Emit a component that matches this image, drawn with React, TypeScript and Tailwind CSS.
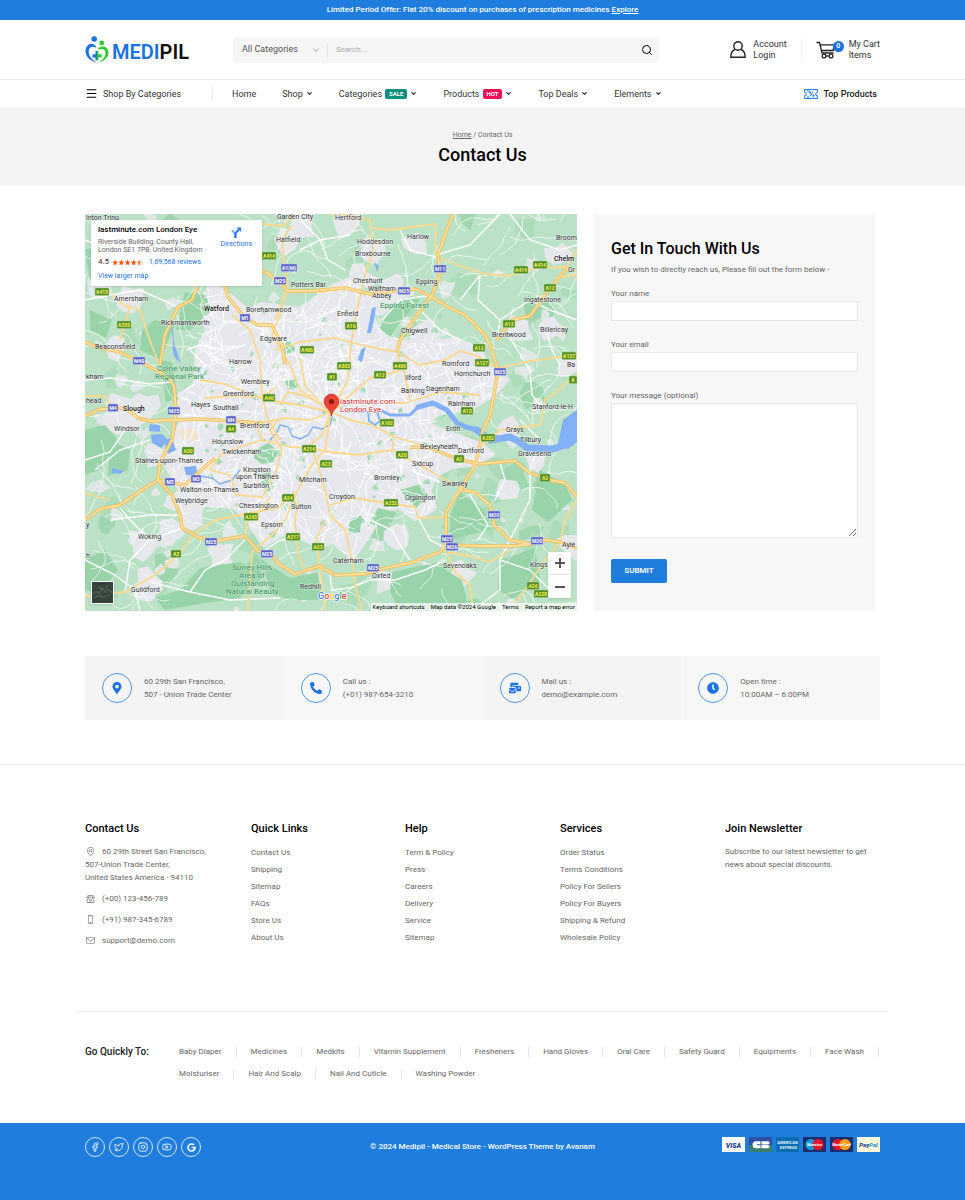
import React from 'react';
import { ChevronDown, Facebook, Instagram, Menu, Search, Twitter, Youtube } from 'lucide-react';
import { FaClock, FaGoogle, FaMailBulk, FaMapMarkerAlt, FaPhoneAlt } from 'react-icons/fa';
import { SlEnvolope, SlLocationPin, SlScreenSmartphone } from 'react-icons/sl';

type Point = [number, number];
type Label = [string, number, number];

const navItems: { label: string; badge?: string; badgeColor?: string; menu: boolean }[] = [
  { label: 'Home', menu: false },
  { label: 'Shop', menu: true },
  { label: 'Categories', badge: 'SALE', badgeColor: 'bg-[#0c8f7c]', menu: true },
  { label: 'Products', badge: 'HOT', badgeColor: 'bg-[#ee1158]', menu: true },
  { label: 'Top Deals', menu: true },
  { label: 'Elements', menu: true },
];

const infoItems = [
  { icon: FaMapMarkerAlt, top: '60 29th San Francisco,', bottom: '507 - Union Trade Center', bg: 'bg-[#f4f4f4]' },
  { icon: FaPhoneAlt, top: 'Call us :', bottom: '(+01) 987-654-3210', bg: 'bg-[#f7f7f7]' },
  { icon: FaMailBulk, top: 'Mail us :', bottom: 'demo@example.com', bg: 'bg-[#f4f4f4]' },
  { icon: FaClock, top: 'Open time :', bottom: '10:00AM – 6:00PM', bg: 'bg-[#f7f7f7]' },
];

const linkColumns = [
  { title: 'Quick Links', links: ['Contact Us', 'Shipping', 'Sitemap', 'FAQs', 'Store Us', 'About Us'] },
  { title: 'Help', links: ['Term & Policy', 'Press', 'Careers', 'Delivery', 'Service', 'Sitemap'] },
  {
    title: 'Services',
    links: ['Order Status', 'Terms Conditions', 'Policy For Sellers', 'Policy For Buyers', 'Shipping & Refund', 'Wholesale Policy'],
  },
];

const quickRows = [
  ['Baby Diaper', 'Medicines', 'Medkits', 'Vitamin Supplement', 'Fresheners', 'Hand Gloves', 'Oral Care', 'Safety Guard', 'Equipments', 'Face Wash'],
  ['Moisturiser', 'Hair And Scalp', 'Nail And Cuticle', 'Washing Powder'],
];

// ---- map data ----

const motorways = [
  'M85 342 L97 347 L120 352 L140 362 L158 371 L170 379 L174 387 L176 410 L172 440 L160 462 L158 480 L172 495 L180 515 L182 528 L200 538 L215 541 L245 536 L258 551 L270 553 L280 565 L295 574 L310 569 L320 566 L335 575 L365 574 L385 568 L410 563 L440 552 L446 545 L446 512 L460 490 L475 465 L480 445 L483 430 L490 415 L493 400 L498 370 L492 350 L485 335 L465 315 L450 308 L430 296 L415 289 L395 291 L370 294 L345 288 L310 291 L288 291 L268 273 L258 270',
  'M197 287 L192 300 L178 307 L165 335 L160 365',
  'M225 286 L228 297 L245 318 L258 325 L272 325 L282 345 L285 365',
  'M453 214 L446 232 L438 255 L440 275 L432 295 L415 318 L400 340 L397 352',
  'M85 416 L100 409 L125 408 L138 418 L150 421 L200 419 L233 421 L262 423',
  'M85 520 L100 509 L120 505 L145 488 L158 480 L185 485 L200 471 L215 458',
  'M460 490 L475 492 L490 505 L494 525 L510 540 L530 544 L545 540 L560 542 L577 548',
  'M446 545 L480 546 L515 546 L530 544',
  'M410 447 L430 448 L455 458 L478 464 L500 462 L515 461 L530 473 L550 480 L565 483 L577 497',
  'M497 340 L512 320 L530 316 L545 295 L565 270 L568 268',
];

const mainRoads = [
  'M331 214 L340 214 L370 220 L373 250 L365 275 L357 310 L351 345 L348 380 L331 412',
  'M373 228 L390 230 L420 226 L435 224 L436 255',
  'M438 257 L455 264 L485 274 L510 276 L535 268 L565 267 L577 272',
  'M285 291 L280 315 L272 335 L290 365 L300 390 L331 412',
  'M200 226 L210 240 L225 275 L225 290',
  'M262 224 L285 226 L292 214 M292 225 L282 240 L284 262 L288 290 L275 320',
  'M287 291 L300 290 L320 292 L345 288',
  'M130 305 L126 320 L120 340',
  'M112 295 L125 306 L140 310 L148 335 L158 362',
  'M200 380 L225 384 L245 392 L265 400 L300 405 L331 412',
  'M204 398 L232 396 L262 397 L275 388',
  'M232 315 L250 330 L260 360 L262 395 L268 420 L280 440',
  'M262 423 L285 418 L310 420 L331 412',
  'M255 421 L262 440 L240 447 L220 455 L210 470 L230 475 L236 495 L262 497 L275 475 L282 450',
  'M275 350 L300 342 L335 338 L365 346 L397 352 L405 375 L410 400',
  'M397 352 L420 365 L445 360 L460 351 L475 355 L498 368 L530 361 L560 357 L577 354',
  'M331 412 L350 395 L370 378 L395 372 L405 368',
  'M331 412 L350 420 L372 425 L395 437 L425 446',
  'M394 438 L392 450 L430 471 L455 485',
  'M331 412 L322 435 L310 445 L318 465 L325 490 L330 515 L345 530 L352 560 L355 585 L362 611',
  'M331 412 L325 450 L312 465 L298 490 L285 520 L272 535 L252 552 L248 611',
  'M310 448 L290 447 L262 440 M282 450 L270 430 L280 418',
  'M182 550 L195 533 L215 520 L245 514 L278 508 L295 492',
  'M182 550 L165 567 L150 578 L125 592 L85 596',
  'M245 536 L248 520 L262 510 L270 497',
  'M298 500 L295 520 L298 555 L306 572',
  'M330 505 L355 498 L385 503 L415 507 L418 518 L446 517',
  'M446 550 L455 572 L470 585 L473 611 M446 552 L470 556 L490 562 L510 550',
  'M483 445 L500 430 L540 425 L545 400 L577 375',
  'M560 542 L565 520 L577 500 M560 542 L545 560 L525 590 L510 611',
  'M565 270 L577 250 M577 275 L555 278',
  'M331 412 L345 402 L375 403 L405 403 L440 392 L480 395',
  'M320 566 L323 590 L325 611 M320 566 L316 540 L325 520',
  'M85 493 L110 500 M85 396 L105 396 L112 408',
  'M308 448 L330 452 L358 455 L392 450',
  'M300 358 L305 385 L318 400 M280 405 L288 392 L305 396 L322 404',
];

const lanes = [
  'M85 240 L110 250 L140 240 L180 250 L200 226 M85 300 L110 295 L140 290 L178 307',
  'M85 380 L110 378 L150 384 L172 382 M95 470 L120 450 L150 440 M85 460 L110 452 L125 430',
  'M110 520 L150 515 L180 515 M125 592 L130 560 L150 540 L182 528 M150 540 L130 520 L118 505',
  'M85 560 L115 575 L135 590 L140 611 M150 582 L190 592 L230 600 L280 598',
  'M400 230 L410 250 L436 257 M436 255 L470 245 L500 214 M480 275 L478 300 L500 320 L497 340',
  'M480 275 L460 300 M500 320 L530 300 L550 310 L577 320 M510 338 L530 370 L532 395 L545 410',
  'M410 300 L440 330 L460 340 M382 320 L400 300 L432 295 M546 330 L552 350 L560 365',
  'M410 470 L440 482 M447 512 L455 495 L480 460 M470 495 L488 525 L478 540',
  'M530 470 L530 500 L515 530 L500 560 L500 590 L480 605 M500 560 L530 570 L550 590',
  'M370 520 L392 530 L400 545 L410 560 M412 505 L430 540 L446 548',
  'M262 552 L280 540 L298 540 M245 540 L225 560 L205 570 L190 592',
  'M330 575 L332 590 L350 588 L370 580 L395 580 M395 580 L425 570 L446 560',
  'M295 214 L320 240 L328 260 L345 270 M300 250 L320 240 L350 235',
  'M186 350 L200 345 L225 350 L245 345 M186 390 L200 380 L205 365 L190 350',
  'M520 420 L540 440 L530 470 M500 462 L505 480 L495 500',
  'M510 214 L530 240 L560 250 L577 245',
];

const urbanArea =
  'M212 286 L232 298 L248 312 L262 305 L300 310 L335 286 L350 280 L364 300 L374 322 L388 340 L400 342 L430 344 L455 340 L480 350 L486 366 L506 380 L492 395 L470 408 L440 412 L425 424 L450 434 L478 444 L492 454 L470 464 L452 466 L436 474 L428 490 L434 508 L415 518 L398 505 L380 515 L368 535 L352 558 L335 540 L318 546 L300 536 L284 532 L264 544 L248 520 L235 506 L202 502 L180 488 L166 464 L174 444 L182 420 L180 395 L196 386 L198 350 L208 330 L198 306 Z';

const parkAreas = [
  'M255 450 L268 443 L278 450 L274 462 L262 464 L254 458 Z',
  'M260 474 L270 472 L274 488 L264 494 Z',
  'M380 328 L392 305 L412 296 L420 300 L400 322 L390 338 Z',
  'M155 320 L175 325 L160 360 L140 350 L142 330 Z',
  'M160 360 L172 362 L178 400 L166 402 Z',
  'M85 430 L105 425 L118 440 L100 470 L85 475 Z',
  'M110 440 L130 450 L128 470 L108 476 Z',
  'M200 568 L240 562 L262 572 L240 598 L200 604 L165 610 L155 598 L180 590 Z',
  'M262 560 L290 578 L318 572 L322 600 L290 600 L270 592 Z',
  'M392 572 L410 568 L440 562 L446 570 L462 580 L468 606 L430 611 L400 611 L390 592 Z',
  'M460 492 L485 510 L490 530 L450 540 L450 515 Z',
  'M540 470 L565 484 L572 500 L548 522 L532 510 Z',
  'M500 560 L535 548 L540 580 L515 600 L498 590 Z',
  'M378 508 L396 512 L392 522 L368 526 Z',
  'M90 310 L112 320 L106 338 L90 330 Z',
  'M280 345 L290 340 L296 350 L286 356 Z',
  'M285 380 L296 378 L298 388 L288 390 Z',
  'M85 250 L100 245 L108 262 L90 280 Z',
  'M185 292 L205 295 L212 310 L190 330 L176 330 Z',
  'M400 490 L420 484 L428 495 L416 508 Z',
  'M350 520 L362 514 L360 532 L348 534 Z',
  'M85 560 L105 550 L118 570 L100 592 L85 590 Z',
];

const towns: Label[] = [
  ['Garden City', 277, 219], ['Hertford', 335, 220], ['Hatfield', 276, 242], ['Harlow', 407, 239],
  ['Hoddesdon', 357, 244], ['Broxbourne', 355, 256], ['Broom', 556, 240], ['Gr', 568, 272],
  ['Cheshunt', 353, 283], ['Epping', 416, 284], ['Waltham', 368, 291], ['Abbey', 372, 298],
  ['Potters Bar', 291, 287], ['Ingatestone', 524, 302], ['Amersham', 114, 301], ['Borehamwood', 246, 312],
  ['Enfield', 337, 316], ['Rickmansworth', 161, 325], ['Chigwell', 401, 333], ['Billericay', 540, 332],
  ['Brentwood', 492, 337], ['Edgware', 260, 341], ['Beaconsfield', 95, 349], ['Harrow', 229, 364],
  ['Romford', 442, 366], ['Ba', 567, 367], ['Hornchurch', 454, 376], ['Wembley', 241, 384],
  ['Ilford', 405, 380], ['Greenford', 223, 396], ['Barking', 401, 393], ['Dagenham', 426, 391],
  ['kham', 86, 379], ['head', 86, 403], ['Hayes', 191, 407], ['Southall', 213, 410],
  ['Rainham', 448, 406], ['Stanford-le-H', 532, 409], ['Windsor', 114, 431], ['Brentford', 240, 428],
  ['Erith', 446, 431], ['Grays', 506, 432], ['Hounslow', 212, 444], ['Tilbury', 520, 442],
  ['Twickenham', 222, 454], ['Bexleyheath', 420, 449], ['Dartford', 458, 453], ['Gravesend', 518, 456],
  ['Staines-upon-Thames', 135, 463], ['Sidcup', 412, 466], ['Kingston', 243, 472], ['upon Thames', 236, 479],
  ['Bromley', 374, 480], ['Surbiton', 243, 488], ['Mitcham', 299, 482], ['Swanley', 442, 486],
  ['Walton-on-Thames', 180, 492], ['Weybridge', 175, 503], ['Croydon', 329, 499], ['Orpington', 405, 500],
  ['Chessington', 239, 508], ['Sutton', 291, 509], ['y', 86, 527], ['Epsom', 261, 527],
  ['Woking', 138, 539], ['Ayle', 562, 547], ['Caterham', 333, 563], ['Sevenoaks', 443, 568],
  ['Kings', 530, 567], ['Oxted', 372, 578], ['Redhill', 300, 589], ['Guildford', 131, 592],
  ['inton Tring', 86, 220], ['h', 86, 558],
];

const boldTowns: Label[] = [['Watford', 204, 311], ['Slough', 123, 411], ['Chelm', 554, 261]];

const parkLabels: Label[] = [
  ['Colne Valley', 157, 371], ['Regional Park', 155, 379], ['Epping Forest', 380, 308],
  ['Surrey Hills', 232, 570], ['Area of', 239, 578], ['Outstanding', 231, 586], ['Natural Beauty', 226, 594],
];

const motorwaySigns: Label[] = [
  ['A1(M)', 289, 268], ['M25', 280, 281], ['M11', 440, 269], ['M25', 404, 291], ['M1', 245, 318],
  ['M40', 139, 361], ['M25', 500, 372], ['M4', 113, 408], ['M25', 174, 411], ['M4', 231, 420],
  ['M3', 170, 482], ['M3', 196, 479], ['M25', 211, 542], ['M25', 267, 554], ['M20', 494, 515],
  ['M25', 447, 539], ['M26', 452, 547], ['M20', 537, 541], ['M25', 373, 568],
];

const roadSigns: Label[] = [
  ['A414', 269, 256], ['A414', 521, 270], ['A414', 540, 265], ['A413', 102, 292], ['A12', 550, 288],
  ['A355', 124, 325], ['A10', 351, 326], ['A12', 509, 324], ['A406', 307, 350], ['A12', 479, 348],
  ['A127', 482, 363], ['A127', 569, 356], ['A503', 344, 366], ['A406', 400, 366], ['A12', 380, 375],
  ['A1', 332, 377], ['A13', 467, 411], ['A40', 269, 398], ['A4', 231, 429], ['A102', 387, 423],
  ['A282', 488, 438], ['A30', 188, 451], ['A214', 309, 449], ['A20', 402, 455], ['A2', 459, 459],
  ['A23', 326, 464], ['A24', 288, 498], ['A2', 545, 478], ['A232', 391, 503], ['A243', 251, 517],
  ['A217', 293, 537], ['A3', 176, 554], ['A23', 318, 547], ['A26', 533, 586], ['A228', 541, 594],
  ['A', 573, 380],
];

// small deterministic generator so that the side streets never move between renders
function makeRandom(seed: number) {
  let s = seed;
  return () => {
    s = (s * 16807) % 2147483647;
    return s / 2147483647;
  };
}

function wander(rand: () => number, start: Point, steps: number, length: number) {
  let [x, y] = start;
  let angle = rand() * Math.PI * 2;
  let d = `M${x.toFixed(1)} ${y.toFixed(1)}`;
  for (let i = 0; i < steps; i++) {
    angle += (rand() - 0.5) * 1.1;
    x += Math.cos(angle) * length;
    y += Math.sin(angle) * length;
    d += ` L${x.toFixed(1)} ${y.toFixed(1)}`;
  }
  return d;
}

function patch(rand: () => number, [cx, cy]: Point, radius: number) {
  const points: string[] = [];
  for (let i = 0; i < 9; i++) {
    const a = (i / 9) * Math.PI * 2;
    const r = radius * (0.5 + rand() * 0.8);
    points.push(`${(cx + Math.cos(a) * r).toFixed(1)},${(cy + Math.sin(a) * r).toFixed(1)}`);
  }
  return points.join(' ');
}

const rand = makeRandom(4217);
const anywhere = (): Point => [85 + rand() * 492, 214 + rand() * 397];
const countryStreets = Array.from({ length: 240 }, () => wander(rand, anywhere(), 8, 6));
const cityStreets = Array.from({ length: 560 }, () => wander(rand, [175 + rand() * 325, 285 + rand() * 265], 6, 5));
const fields = Array.from({ length: 60 }, () => patch(rand, anywhere(), 7 + rand() * 9));
const villages = Array.from({ length: 90 }, () => patch(rand, anywhere(), 3 + rand() * 6));
const cityParks = Array.from({ length: 90 }, () => patch(rand, [190 + rand() * 280, 305 + rand() * 230], 1 + rand() * 3));
const townPatches: Point[] = [
  [415, 243], [374, 250], [300, 225], [290, 245], [360, 278], [560, 254], [520, 328], [552, 328], [130, 300],
  [115, 346], [120, 408], [115, 425], [140, 545], [145, 582], [150, 590], [170, 535], [220, 555], [510, 432],
  [535, 458], [507, 490], [460, 573], [385, 580], [310, 588], [348, 225], [567, 365], [180, 500], [190, 515],
  [135, 255], [205, 270], [100, 285], [345, 510], [395, 535], [570, 545], [450, 456], [395, 288], [145, 405],
  [135, 420], [155, 455], [380, 300], [425, 335],
];
const townShapes = townPatches.map((p) => patch(rand, p, 14));

const MapDrawing: React.FC = () => (
  <svg
    viewBox="85 214 492 397"
    preserveAspectRatio="xMidYMid slice"
    className="block h-full w-full"
    role="img"
    aria-label="Map of London"
    fontFamily="Roboto, sans-serif"
  >
    <defs>
      <clipPath id="city">
        <path d={urbanArea} />
      </clipPath>
    </defs>
    <rect x="85" y="214" width="492" height="397" fill="#bbe2c6" />
    {fields.map((p, i) => (
      <polygon key={i} points={p} fill={i % 3 ? '#addcbb' : '#9fd6b0'} />
    ))}
    {villages.map((p, i) => (
      <polygon key={i} points={p} fill="#dfe8e4" />
    ))}
    {townShapes.map((p, i) => (
      <polygon key={i} points={p} fill="#e6e8ec" />
    ))}
    <path d={urbanArea} fill="#e7e8ed" stroke="#e7e8ed" strokeWidth="6" strokeLinejoin="round" />
    {cityParks.map((p, i) => (
      <polygon key={i} points={p} fill="#a9dab8" />
    ))}
    {parkAreas.map((d) => (
      <path key={d} d={d} fill="#98d3aa" />
    ))}
    <path d="M177 431 L184 428 L196 430 L200 436 L196 441 L182 440 Z" fill="#f3e4d2" />

    <g fill="none" stroke="#fff">
      <g strokeWidth="0.8" opacity="0.85">
        {countryStreets.map((d, i) => (
          <path key={i} d={d} />
        ))}
      </g>
      <g strokeWidth="0.9" clipPath="url(#city)">
        {cityStreets.map((d, i) => (
          <path key={i} d={d} />
        ))}
      </g>
      <g strokeWidth="1.4">
        {lanes.map((d) => (
          <path key={d} d={d} />
        ))}
      </g>
    </g>

    <g fill="#83b1f7">
      <path d="M150 424 L160 425 L160 432 L149 431 Z M151 435 L162 434 L168 440 L161 448 L152 443 Z M164 440 L172 438 L176 450 L168 454 Z M184 467 L196 466 L198 476 L186 475 Z M112 468 L124 471 L120 474 L112 473 Z" />
      <path d="M372 308 L376 307 L374 320 L371 333 L367 333 Z M361 350 L366 346 L362 362 L358 360 Z M374 262 L379 266 L377 272 Z M172 345 L177 352 L178 362 L174 356 Z" />
      <path d="M558 444 L563 420 L577 410 L577 442 L568 449 Z" />
    </g>
    <g fill="none" stroke="#83b1f7" strokeLinejoin="round" strokeLinecap="round">
      <path d="M200 476 L212 478 L220 484 L232 480 L240 470" strokeWidth="1.5" />
      <path d="M270 440 L277 432 L280 425 L288 427 L292 436 L300 439 L308 435 L313 427 L322 429 L330 425 L332 417" strokeWidth="1.4" />
      <path d="M345 412 L358 412 L368 412 L369 421 L375 425 L380 421 L377 411 L383 411" strokeWidth="2" />
      <path d="M382 411 L390 415 L410 415 L418 407 L433 403" strokeWidth="3" />
      <path d="M418 407 L433 403 L447 410 L457 423 L466 427 L477 430" strokeWidth="5" />
      <path d="M477 430 L490 440 L510 437 L520 442 L527 448 L553 449 L565 445" strokeWidth="7" />
      <path d="M172 328 L174 345 L180 362" strokeWidth="1.2" />
    </g>

    <g fill="none" stroke="#fbd98f" strokeLinejoin="round" strokeWidth="1.8">
      {mainRoads.map((d) => (
        <path key={d} d={d} />
      ))}
    </g>
    <g fill="none" strokeLinejoin="round">
      {motorways.map((d) => (
        <path key={d} d={d} stroke="#f3bd55" strokeWidth="3.4" />
      ))}
      {motorways.map((d) => (
        <path key={d} d={d} stroke="#fddf9d" strokeWidth="1.8" />
      ))}
    </g>

    <g fontSize="7" fill="#2b2d31" stroke="#fff" strokeOpacity="0.7" strokeWidth="1" paintOrder="stroke" strokeLinejoin="round">
      {towns.map(([name, x, y]) => (
        <text key={name + x} x={x} y={y}>
          {name}
        </text>
      ))}
      <g fontWeight="500" fill="#111">
        {boldTowns.map(([name, x, y]) => (
          <text key={name} x={x} y={y}>
            {name}
          </text>
        ))}
      </g>
    </g>
    <g fontSize="8" fill="#39905a" stroke="#d5eedc" strokeOpacity="0.7" strokeWidth="1" paintOrder="stroke">
      {parkLabels.map(([name, x, y]) => (
        <text key={name} x={x} y={y}>
          {name}
        </text>
      ))}
    </g>
    <g fontSize="5" fontWeight="700" fill="#fff" textAnchor="middle">
      {motorwaySigns.map(([name, x, y]) => (
        <g key={name + x + y}>
          <rect x={x - name.length - 3} y={y - 4} width={name.length * 2 + 6} height="7.5" rx="1" fill="#5b63c9" stroke="#c3c9f2" strokeWidth="0.5" />
          <text x={x} y={y + 2}>
            {name}
          </text>
        </g>
      ))}
      {roadSigns.map(([name, x, y]) => (
        <g key={name + x + y}>
          <rect x={x - name.length - 3} y={y - 4} width={name.length * 2 + 6} height="7.5" rx="1" fill="#53902a" stroke="#a8cf8a" strokeWidth="0.5" />
          <text x={x} y={y + 2} fill="#fbf04e">
            {name}
          </text>
        </g>
      ))}
    </g>

    <path d="M331.500 416 C330.500 409 324 407 324 401.500 A7.500 7.500 0 0 1 339 401.500 C339 407 332.500 409 331.500 416 Z" fill="#ea4335" stroke="#c5221f" strokeWidth="0.6" />
    <circle cx="331.500" cy="401.500" r="2.600" fill="#8c1a14" />
    <g fontSize="8" fill="#d5252a" stroke="#fff" strokeWidth="1.4" paintOrder="stroke">
      <text x="340" y="404">lastminute.com</text>
      <text x="340" y="412">London Eye</text>
    </g>
    <text x="318" y="599" fontSize="9" fontWeight="500" stroke="#fff" strokeWidth="1.4" paintOrder="stroke">
      <tspan fill="#4285f4">G</tspan>
      <tspan fill="#ea4335">o</tspan>
      <tspan fill="#fbbc05">o</tspan>
      <tspan fill="#4285f4">g</tspan>
      <tspan fill="#34a853">l</tspan>
      <tspan fill="#ea4335">e</tspan>
    </text>
  </svg>
);

const Stars: React.FC = () => (
  <svg viewBox="0 0 50 10" className="h-[7px] w-[31px]" role="img" aria-label="4.5 stars">
    {[0, 1, 2, 3].map((i) => (
      <path key={i} transform={`translate(${i * 10} 0)`} d="M5 .3 6.400 3.500 9.800 3.800 7.200 6.100 8 9.500 5 7.700 2 9.500 2.800 6.100.2 3.800 3.600 3.500Z" fill="#ef5b17" />
    ))}
    <path transform="translate(40 0)" d="M5 .3V7.700L2 9.500 2.800 6.100.2 3.800 3.600 3.500Z" fill="#ef5b17" />
    <path transform="translate(40 0)" d="M5 .3 6.400 3.500 9.800 3.800 7.200 6.100 8 9.500 5 7.700Z" fill="#f7c9ae" />
  </svg>
);

const MapPanel: React.FC = () => (
  <section className="relative h-[397px] min-w-0 flex-1 overflow-hidden" aria-label="Our location">
    <MapDrawing />
    <div className="absolute top-[6px] left-[6px] flex h-[66px] w-[171px] justify-between bg-white pt-1 pr-[10px] pl-[7px] shadow-sm">
      <div className="text-[7px] leading-2 whitespace-nowrap text-[#5f6368]">
        <h2 className="mb-[2px] text-[8px] leading-3 font-medium text-black">lastminute.com London Eye</h2>
        <p>Riverside Building, County Hall,</p>
        <p>London SE1 7PB, United Kingdom</p>
        <p className="mt-1 flex items-center gap-[3px]">
          <span className="text-[8px] text-[#333]">4.5</span>
          <Stars />
          <a href="#reviews" className="ml-[3px] text-[#1a73e8]">1,69,568 reviews</a>
        </p>
        <a href="#larger-map" className="mt-[6px] block text-[#1a73e8]">View larger map</a>
      </div>
      <a href="#directions" className="flex flex-col items-center text-[7px] leading-2 text-[#1a73e8]">
        <svg viewBox="0 0 12 14" className="mt-[2px] mb-[1px] h-[13px] w-3" aria-hidden="true">
          <path d="M5 13V8.500L1.500 4.500" fill="none" stroke="#7aaaf2" strokeWidth="2" />
          <path d="M5.500 13V7.500L9 4" fill="none" stroke="#2f7de9" strokeWidth="2.400" />
          <path d="M6.500 1.500h5V6.500z" fill="#2f7de9" />
        </svg>
        Directions
      </a>
    </div>
    <button
      type="button"
      aria-label="Show satellite imagery"
      className="absolute bottom-[7px] left-[6px] size-[23px] border border-white bg-[#36433a] shadow"
    >
      <svg viewBox="0 0 20 20" className="size-full" aria-hidden="true">
        <path d="M0 12l4-3 3 2 3-5 3 4 3-3 4 4M2 15l5-2 4 2 6-3M6 4l3 3M15 3l-2 4" fill="none" stroke="#5a6657" strokeWidth="1" />
      </svg>
    </button>
    <div className="absolute right-[6px] bottom-[13px] flex w-[23px] flex-col bg-white text-[#555] shadow">
      <button type="button" aria-label="Zoom in" className="flex h-[23px] items-center justify-center border-b border-[#e6e6e6]">
        <svg viewBox="0 0 10 10" className="size-[10px]"><path d="M5 0v10M0 5h10" stroke="currentColor" strokeWidth="2" /></svg>
      </button>
      <button type="button" aria-label="Zoom out" className="flex h-[23px] items-center justify-center">
        <svg viewBox="0 0 10 10" className="size-[10px]"><path d="M0 5h10" stroke="currentColor" strokeWidth="2" /></svg>
      </button>
    </div>
    <div className="absolute right-0 bottom-0 flex h-2 items-center gap-[6px] bg-white/70 px-[2px] text-[6px] leading-2 text-black">
      <button type="button">Keyboard shortcuts</button>
      <span>Map data ©2024 Google</span>
      <a href="#terms">Terms</a>
      <a href="#report">Report a map error</a>
    </div>
  </section>
);

const Logo: React.FC = () => (
  <a href="#home" className="flex w-[148px] items-center gap-[3px]" aria-label="Medipil">
    <svg viewBox="0 0 24 27" className="h-[27px] w-6" aria-hidden="true">
      <circle cx="9.200" cy="3" r="2.800" fill="#1a73e0" />
      <circle cx="16.700" cy="7" r="2.400" fill="#2ccb2c" />
      <path d="M11.500 12.500C11 8.500 6.500 6.300 3.200 9 -.8 12.300-.3 19 4 22.800 6.800 25.200 9.500 26 11.800 26.500 8.500 24.500 4.500 21.500 3.800 17 3.200 13.300 5 10.800 7.500 10.800 9.500 10.800 10.800 11.600 11.500 12.500Z" fill="#1a73e0" />
      <path d="M12.500 13.500C14 10.500 18.800 9.300 21.500 12 25 15.500 23.500 20.500 20 23.500 17.800 25.400 15.500 26 14 26.500 16.500 24.500 19.500 22.500 20.300 19 21 15.800 19.700 13.300 17.500 13.100 15.500 12.900 13.500 13.600 12.500 13.500Z" fill="#2ccb2c" />
      <path d="M10.500 15H12v9.200h-1.500v-2.700H7.500v-3.300h3Z" fill="#1a73e0" />
      <path d="M12 15h1.500v3.200h3.200v3.300h-3.200v2.700H12Z" fill="#2ccb2c" />
    </svg>
    <span className="pt-1 text-[20px] leading-6 font-semibold text-[#111]">
      <span className="text-[#1a73e0]">MEDI</span>PIL
    </span>
  </a>
);

const Header: React.FC = () => (
  <header>
    <p className="h-5 bg-[#1f7edd] text-center text-[8px] leading-[19px] font-medium text-white">
      Limited Period Offer: Flat 20% discount on purchases of prescription medicines{' '}
      <a href="#explore" className="underline">Explore</a>
    </p>
    <div className="border-b border-[#ececec]">
      <div className="mx-auto flex h-[59px] max-w-[795px] items-center">
        <Logo />
        <form role="search" className="flex h-[26px] max-w-[426px] flex-1 items-center rounded bg-[#f6f6f6]" onSubmit={(e) => e.preventDefault()}>
          <div className="relative flex h-[14px] w-[95px] items-center border-r border-[#e2e2e2]">
            <select aria-label="Category" className="w-full appearance-none bg-transparent pl-[9px] text-[9px] text-[#555] outline-none">
              <option>All Categories</option>
            </select>
            <ChevronDown className="pointer-events-none absolute right-[6px] size-[10px] text-[#888]" strokeWidth={2} />
          </div>
          <input type="search" aria-label="Search" placeholder="Search..." className="min-w-0 flex-1 bg-transparent px-2 text-[8px] outline-none placeholder:text-[#aaa]" />
          <button type="submit" aria-label="Submit search" className="px-[6px] text-black">
            <Search className="size-3" strokeWidth={2} />
          </button>
        </form>
        <div className="ml-auto flex items-center text-[9px] leading-[11px] text-[#333]">
          <a href="#account" className="flex items-center gap-[7px] border-r border-[#eee] py-[1px] pr-[14px]">
            <svg viewBox="0 0 16 17" className="h-[17px] w-4" fill="none" stroke="#222" strokeWidth="1.4" aria-hidden="true">
              <circle cx="8" cy="5" r="4.200" />
              <path d="M4.800 8.500C2.300 9.600.8 12 .8 16.200h14.400C15.200 12 13.700 9.600 11.200 8.500" strokeLinejoin="round" />
            </svg>
            <span>Account<br />Login</span>
          </a>
          <a href="#cart" className="flex items-center gap-[5px] pl-[14px]">
            <span className="relative block w-7">
              <svg viewBox="0 0 20 18" className="h-[18px] w-5" fill="none" stroke="#222" strokeWidth="1.300" aria-hidden="true">
                <path d="M.5 1.500h3L6 12h11.500M4.200 3.800H18L17.200 9.500H5.500" />
                <circle cx="8" cy="15" r="1.900" />
                <circle cx="15" cy="15" r="1.900" />
                <path d="M10 15h3" />
              </svg>
              <span className="absolute top-0 right-0 flex size-[11px] items-center justify-center rounded-full bg-[#1a73e0] text-[7px] leading-none font-semibold text-white">0</span>
            </span>
            <span>My Cart<br />Items</span>
          </a>
        </div>
      </div>
    </div>
    <nav className="mx-auto flex h-[27px] max-w-[795px] items-center text-[9px] leading-3 text-[#333]">
      <button type="button" className="flex w-[128px] items-center gap-[5px] border-r border-[#e8e8e8]">
        <Menu className="size-[13px] text-black" strokeWidth={2} />
        Shop By Categories
      </button>
      <ul className="ml-[19px] flex items-center gap-[26px]">
        {navItems.map((item) => (
          <li key={item.label}>
            <a href="#nav" className="flex items-center gap-[3px]">
              {item.label}
              {item.badge && (
                <span className={`rounded-[2px] px-1 text-[6px] leading-[10px] font-bold text-white ${item.badgeColor}`}>{item.badge}</span>
              )}
              {item.menu && <ChevronDown className="size-[7px]" strokeWidth={4} />}
            </a>
          </li>
        ))}
      </ul>
      <a href="#top" className="ml-auto flex items-center gap-[5px] pr-[3px] font-medium text-[#222]">
        <svg viewBox="0 0 14 10" className="h-[10px] w-[14px]" fill="none" stroke="#3b8ae6" strokeWidth="1.100" aria-hidden="true">
          <path d="M.6.6h12.800v2.700a1.700 1.700 0 0 0 0 3.400v2.700H.6V6.700a1.700 1.700 0 0 0 0-3.400Z" />
          <path d="M4 1v2M4 7v2M9 2.800 6 7.200" />
          <circle cx="6" cy="3.500" r=".7" />
          <circle cx="9.400" cy="6.500" r=".7" />
        </svg>
        Top Products
      </a>
    </nav>
  </header>
);

const ContactForm: React.FC = () => (
  <form className="flex w-[281px] flex-col bg-[#f7f7f7] px-[17px] pt-[25px] pb-[28px] text-[8px] text-[#666]" onSubmit={(e) => e.preventDefault()}>
    <h2 className="text-[16px] leading-5 font-medium text-black">Get In Touch With Us</h2>
    <p className="mt-[5px] leading-3">If you wish to directly reach us, Please fill out the form below -</p>
    <label htmlFor="name" className="mt-3 leading-3">Your name</label>
    <input id="name" type="text" className="mt-[1px] h-5 border border-[#e8e8e8] bg-white px-1" />
    <label htmlFor="email" className="mt-[18px] leading-3">Your email</label>
    <input id="email" type="email" className="mt-[1px] h-5 border border-[#e8e8e8] bg-white px-1" />
    <label htmlFor="message" className="mt-[18px] leading-3">Your message (optional)</label>
    <textarea id="message" className="mt-[1px] h-[135px] resize border border-[#e8e8e8] bg-white px-1" />
    <button type="submit" className="mt-[21px] h-6 w-14 rounded-[2px] bg-[#1f7edd] text-[8px] font-semibold text-white">SUBMIT</button>
  </form>
);

const DeskPhone: React.FC = () => (
  <svg viewBox="0 0 10 9" className="h-2 w-[9px]" fill="none" stroke="currentColor" strokeWidth="0.800" aria-hidden="true">
    <path d="M.5 3C.5 1.200 2.500.5 5 .5s4.500.7 4.500 2.500L7.500 3.400V2.300h-5v1.100Z" />
    <path d="M3 3.500 1.200 5.500v3h7.600v-3L7 3.500" />
    <circle cx="5" cy="6" r="1.200" />
  </svg>
);

const CardLogos: React.FC = () => (
  <ul className="flex gap-1">
    <li>
      <svg viewBox="0 0 23 15" className="h-[15px] w-[23px]" role="img" aria-label="Visa">
        <rect width="23" height="15" fill="#fff" />
        <text x="11.500" y="10.500" textAnchor="middle" fontSize="7" fontWeight="900" fontStyle="italic" fontFamily="Roboto" fill="#1b3f95">VISA</text>
      </svg>
    </li>
    <li>
      <svg viewBox="0 0 23 15" className="h-[15px] w-[23px]" role="img" aria-label="Carte Bleue">
        <rect width="23" height="8" fill="#2d4fa5" />
        <rect y="8" width="23" height="7" fill="#35806e" />
        <path d="M11.500 4.200H7a3.500 3.500 0 0 0 0 7h4.500V8.200H8V7.200h3.500Z" fill="#fff" />
        <path d="M12.500 4.200h6.500a1.600 1.600 0 0 1 0 3.200H12.500Z M12.500 8h6.500a1.600 1.600 0 0 1 0 3.200H12.500Z" fill="#fff" />
      </svg>
    </li>
    <li>
      <svg viewBox="0 0 23 15" className="h-[15px] w-[23px]" role="img" aria-label="American Express">
        <rect width="23" height="15" fill="#0b6db0" />
        <text x="11.500" y="7" textAnchor="middle" fontSize="4" fontWeight="900" fontFamily="Roboto" fill="#cfe6f5">AMERICAN</text>
        <text x="12.500" y="12" textAnchor="middle" fontSize="4" fontWeight="900" fontFamily="Roboto" fill="#cfe6f5">EXPRESS</text>
      </svg>
    </li>
    <li>
      <svg viewBox="0 0 23 15" className="h-[15px] w-[23px]" role="img" aria-label="Maestro">
        <rect width="23" height="15" fill="#1c2f6b" />
        <circle cx="8" cy="7.500" r="5.500" fill="#0a9de0" />
        <circle cx="15" cy="7.500" r="5.500" fill="#e5142b" />
        <text x="11.500" y="9" textAnchor="middle" fontSize="4" fontWeight="700" fontFamily="Roboto" fill="#fff">Maestro</text>
      </svg>
    </li>
    <li>
      <svg viewBox="0 0 23 15" className="h-[15px] w-[23px]" role="img" aria-label="MasterCard">
        <rect width="23" height="15" fill="#1c2f6b" />
        <circle cx="8" cy="7.500" r="5.500" fill="#e5142b" />
        <circle cx="15" cy="7.500" r="5.500" fill="#f7a11a" />
        <text x="11.500" y="9" textAnchor="middle" fontSize="3.500" fontWeight="700" fontFamily="Roboto" fill="#fff">MasterCard</text>
      </svg>
    </li>
    <li>
      <svg viewBox="0 0 23 15" className="h-[15px] w-[23px]" role="img" aria-label="PayPal">
        <rect width="23" height="15" fill="#fdf6d8" />
        <text x="11.500" y="10" textAnchor="middle" fontSize="6" fontWeight="900" fontStyle="italic" fontFamily="Roboto" fill="#1b3f8a">
          Pay<tspan fill="#2a9bd8">Pal</tspan>
        </text>
      </svg>
    </li>
  </ul>
);

const socials = [
  { name: 'Facebook', icon: Facebook },
  { name: 'Twitter', icon: Twitter },
  { name: 'Instagram', icon: Instagram },
  { name: 'YouTube', icon: Youtube },
];

const Footer: React.FC = () => (
  <footer className="mt-11 border-t border-[#e8e8e8]">
    <div className="mx-auto grid max-w-[795px] grid-cols-[166px_154px_155px_165px_1fr] pt-[57px] pb-16 text-[8px] text-[#666]">
      <div>
        <h3 className="text-[11px] leading-[14px] font-medium text-black">Contact Us</h3>
        <address className="mt-[9px] leading-[13px] not-italic">
          <SlLocationPin className="mr-[7px] ml-[1px] inline size-[9px]" />
          60 29th Street San Francisco,
          <br />
          507-Union Trade Center,
          <br />
          United States America - 94110
        </address>
        <ul className="mt-2 flex flex-col gap-2 leading-[13px]">
          <li className="flex items-center gap-[7px] pl-[1px]"><DeskPhone />(+00) 123-456-789</li>
          <li className="flex items-center gap-[7px] pl-[1px]"><SlScreenSmartphone className="size-[9px]" />(+91) 987-345-6789</li>
          <li className="flex items-center gap-[7px] pl-[1px]"><SlEnvolope className="size-[9px]" />support@demo.com</li>
        </ul>
      </div>
      {linkColumns.map((col) => (
        <div key={col.title}>
          <h3 className="text-[11px] leading-[14px] font-medium text-black">{col.title}</h3>
          <ul className="mt-2 leading-[17px]">
            {col.links.map((link) => (
              <li key={link}><a href="#link">{link}</a></li>
            ))}
          </ul>
        </div>
      ))}
      <div>
        <h3 className="text-[11px] leading-[14px] font-medium text-black">Join Newsletter</h3>
        <p className="mt-[9px] leading-[13px]">Subscribe to our latest newsletter to get news about special discounts.</p>
      </div>
    </div>
    <div className="mx-auto flex max-w-[811px] border-t border-[#e8e8e8] px-2 pt-[29px] pb-[38px]">
      <h3 className="w-[94px] text-[10px] leading-[22px] font-medium text-[#222]">Go Quickly To:</h3>
      <div className="text-[8px] leading-[22px] text-[#666]">
        {quickRows.map((row, r) => (
          <ul key={r} className="flex">
            {row.map((name, i) => (
              <li key={name} className="flex items-center whitespace-nowrap">
                <a href="#quick">{name}</a>
                {(r === 0 || i < row.length - 1) && (
                  <span className={`ml-[14px] h-[10px] w-px bg-[#e4e4e4] ${i < row.length - 1 ? 'mr-[14px]' : ''}`} />
                )}
              </li>
            ))}
          </ul>
        ))}
      </div>
    </div>
    <div className="bg-[#1f7edd] pt-[14px] pb-[43px] text-white">
      <div className="mx-auto grid max-w-[795px] grid-cols-[1fr_auto_1fr] items-center">
        <div className="flex gap-1">
          {socials.map((s) => (
            <a key={s.name} href="#social" aria-label={s.name} className="flex size-5 items-center justify-center rounded-full border border-white/80">
              <s.icon className="size-[10px]" strokeWidth={2} />
            </a>
          ))}
          <a href="#social" aria-label="Google" className="flex size-5 items-center justify-center rounded-full border border-white/80">
            <FaGoogle className="size-[9px]" />
          </a>
        </div>
        <p className="text-[8px] leading-3 font-medium">© 2024 Medipil - Medical Store - WordPress Theme by Avanam</p>
        <div className="flex justify-end pb-[5px]"><CardLogos /></div>
      </div>
    </div>
  </footer>
);

const App: React.FC = () => (
  <div className="bg-white font-[Roboto,sans-serif]">
    <Header />
    <div className="bg-[#f4f4f4] pt-[22px] pb-[19px] text-center">
      <p className="text-[7px] leading-3 text-[#666]">
        <a href="#home" className="underline">Home</a> / Contact Us
      </p>
      <h1 className="mt-[2px] text-[18px] leading-6 font-medium text-black">Contact Us</h1>
    </div>
    <main className="mx-auto max-w-[795px] pt-7">
      <div className="flex gap-[17px] pr-[5px]">
        <MapPanel />
        <ContactForm />
      </div>
      <ul className="mt-[45px] grid grid-cols-4 text-[8px] leading-[13px] text-[#666]">
        {infoItems.map((item) => (
          <li key={item.top} className={`flex h-16 items-center gap-3 pl-[17px] ${item.bg}`}>
            <span className="flex size-[30px] items-center justify-center rounded-full border border-[#4c96e6] text-[#1a73e0]">
              <item.icon className="size-3" />
            </span>
            <span>{item.top}<br />{item.bottom}</span>
          </li>
        ))}
      </ul>
    </main>
    <Footer />
  </div>
);

export default App;
